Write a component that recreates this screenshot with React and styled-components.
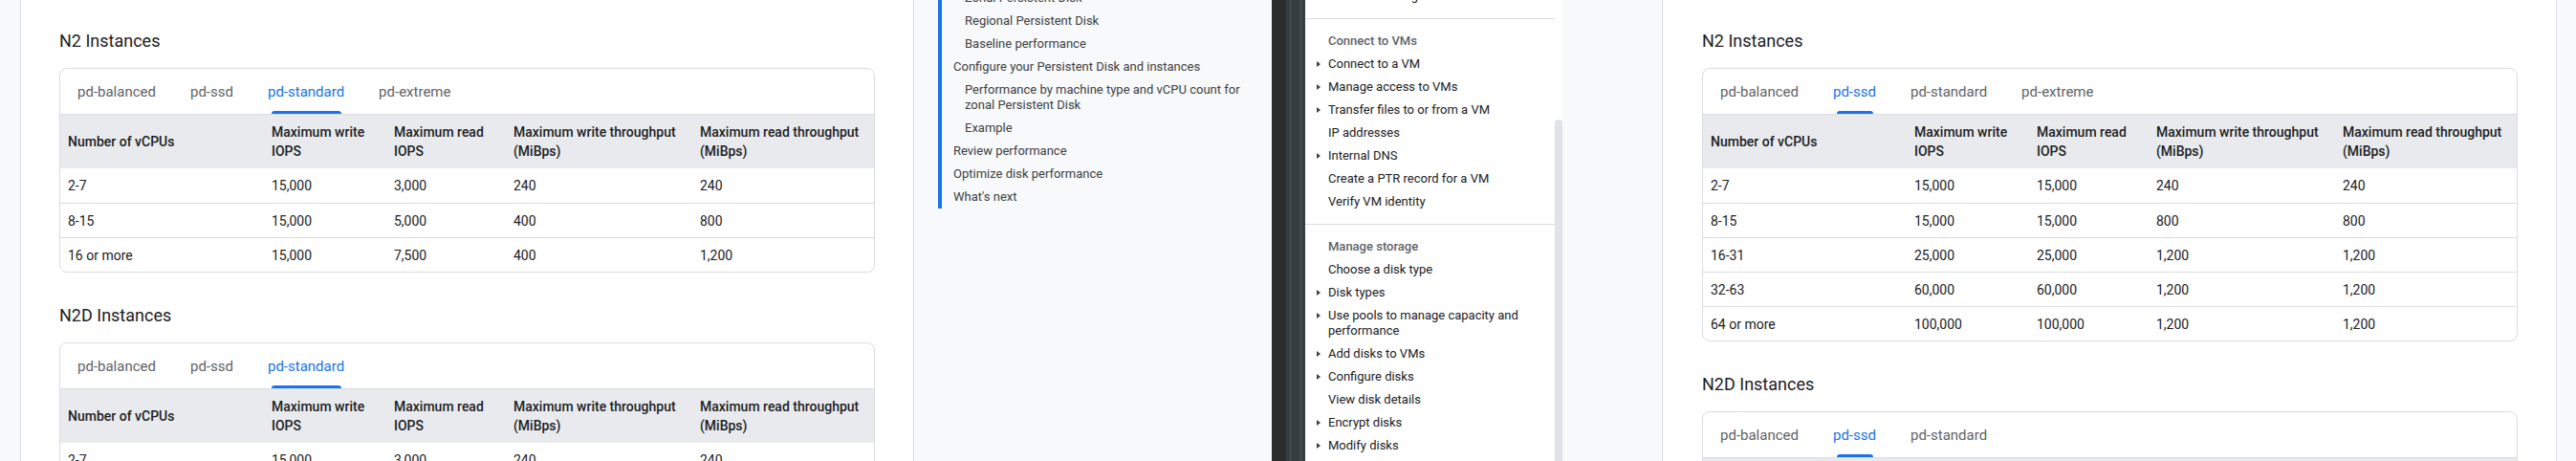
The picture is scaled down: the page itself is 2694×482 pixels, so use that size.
import React from "react";
import styled, { createGlobalStyle } from "styled-components";

const GlobalStyle = createGlobalStyle`
  html, body {
    margin: 0;
    padding: 0;
    background: #f8f9fa;
  }
  body {
    font-family: Roboto, "Liberation Sans", Arial, sans-serif;
    color: #202124;
    -webkit-font-smoothing: antialiased;
  }
  * {
    box-sizing: border-box;
  }
`;

const Page = styled.div`
  display: flex;
  width: 2694px;
  height: 482px;
  overflow: hidden;
  background: #f8f9fa;
`;

const Gutter = styled.div`
  flex: none;
  width: ${({ $w }) => $w}px;
  height: 100%;
  background: #f8f9fa;
`;

const Content = styled.main`
  flex: none;
  width: ${({ $w }) => $w}px;
  height: 100%;
  background: #fff;
  border-left: ${({ $bl }) => ($bl ? "1px solid #dadce0" : "none")};
  border-right: 1px solid #dadce0;
  padding: 31px 0 0 ${({ $pl }) => $pl}px;
  overflow: hidden;
`;

const Heading = styled.h3`
  margin: 0 0 16px;
  font-size: 18px;
  line-height: 24px;
  font-weight: 400;
  color: #202124;
`;

const Card = styled.div`
  width: 853px;
  border: 1px solid #dadce0;
  border-radius: 8px;
  overflow: hidden;
  margin-bottom: 33px;
`;

const TabBar = styled.div`
  display: flex;
  height: 48px;
  border-bottom: 1px solid #dadce0;
`;

const Tab = styled.div`
  position: relative;
  display: flex;
  align-items: center;
  padding: 0 18px;
  font-size: 15px;
  font-weight: 400;
  color: ${({ $active }) => ($active ? "#1a73e8" : "#5f6368")};

  &::after {
    content: "";
    display: ${({ $active }) => ($active ? "block" : "none")};
    position: absolute;
    left: 22px;
    right: 21px;
    bottom: 0;
    height: 3px;
    border-radius: 3px 3px 0 0;
    background: #1a73e8;
  }
`;

const Table = styled.table`
  width: 100%;
  border-collapse: separate;
  border-spacing: 0;
  table-layout: fixed;
  font-size: 14px;
  line-height: 20px;
`;

const Th = styled.th`
  height: 56px;
  padding: 0 8px;
  background: #e8eaed;
  text-align: left;
  vertical-align: middle;
  font-weight: 500;
  color: #202124;
`;

const Td = styled.td`
  height: 36px;
  padding: 0 8px;
  border-top: ${({ $first }) => ($first ? "none" : "1px solid #dadce0")};
  vertical-align: middle;
  color: #202124;
`;

const Toc = styled.aside`
  flex: none;
  width: 374px;
  height: 100%;
  background: #f8f9fa;
  padding-left: 25px;
  overflow: hidden;
`;

const TocList = styled.ul`
  margin: -14px 0 0;
  padding: 0;
  list-style: none;
  border-left: 4px solid #1a73e8;
`;

const TocItem = styled.li`
  padding: 4px 0 4px ${({ $level }) => ($level === 2 ? 24 : 12)}px;
  font-size: 13px;
  line-height: 16px;
  color: #3c4043;
`;

const Editor = styled.div`
  flex: none;
  display: flex;
  width: 35px;
  height: 100%;
`;

const EditorEdge = styled.div`
  width: 15px;
  background: #2c2c2c;
`;

const EditorRail = styled.div`
  width: 20px;
  background: linear-gradient(
    to right,
    #363e41 4px,
    #4f585c 4px 5px,
    #363e41 5px 15px,
    #4f585c 15px 16px,
    #363e41 16px
  );
`;

const Nav = styled.nav`
  flex: none;
  display: flex;
  width: 269px;
  height: 100%;
  background: #fff;
  overflow: hidden;
`;

const NavList = styled.div`
  flex: 1;
  margin-top: -27px;
`;

const NavSection = styled.div`
  padding: 11px 0;

  & + & {
    border-top: 1px solid #dadce0;
  }
`;

const NavRow = styled.div`
  display: flex;
  align-items: flex-start;
  padding: 4px 16px 4px 12px;
  font-size: 13px;
  line-height: 16px;
  font-weight: ${({ $heading }) => ($heading ? 500 : 400)};
  color: ${({ $heading }) => ($heading ? "#5f6368" : "#202124")};
`;

const Caret = styled.span`
  flex: none;
  display: flex;
  align-items: center;
  width: 12px;
  height: 16px;

  &::before {
    content: "";
    display: ${({ $show }) => ($show ? "block" : "none")};
    border-left: 4px solid #3c4043;
    border-top: 3.5px solid transparent;
    border-bottom: 3.5px solid transparent;
  }
`;

const ScrollTrack = styled.div`
  flex: none;
  width: 8px;
  padding-top: 125px;
`;

const ScrollThumb = styled.div`
  height: 100%;
  border-radius: 4px 4px 0 0;
  background: #e0e2e5;
`;

const HEAD = [
  "Number of vCPUs",
  ["Maximum write", "IOPS"],
  ["Maximum read", "IOPS"],
  ["Maximum write throughput", "(MiBps)"],
  ["Maximum read throughput", "(MiBps)"],
];

const COLS = [213, 128, 125, 195, 190];

const STANDARD = [
  ["2-7", "15,000", "3,000", "240", "240"],
  ["8-15", "15,000", "5,000", "400", "800"],
  ["16 or more", "15,000", "7,500", "400", "1,200"],
];

const SSD = [
  ["2-7", "15,000", "15,000", "240", "240"],
  ["8-15", "15,000", "15,000", "800", "800"],
  ["16-31", "25,000", "25,000", "1,200", "1,200"],
  ["32-63", "60,000", "60,000", "1,200", "1,200"],
  ["64 or more", "100,000", "100,000", "1,200", "1,200"],
];

const TABS4 = ["pd-balanced", "pd-ssd", "pd-standard", "pd-extreme"];
const TABS3 = ["pd-balanced", "pd-ssd", "pd-standard"];

const PerfCard = ({ tabs, active, rows }) => (
  <Card>
    <TabBar>
      {tabs.map((t, i) => (
        <Tab key={t} $active={i === active}>
          {t}
        </Tab>
      ))}
    </TabBar>
    <Table>
      <colgroup>
        {COLS.map((w, i) => (
          <col key={i} style={{ width: w }} />
        ))}
      </colgroup>
      <thead>
        <tr>
          {HEAD.map((h, i) => (
            <Th key={i}>
              {Array.isArray(h) ? (
                <>
                  {h[0]}
                  <br />
                  {h[1]}
                </>
              ) : (
                h
              )}
            </Th>
          ))}
        </tr>
      </thead>
      <tbody>
        {rows.map((r, ri) => (
          <tr key={ri}>
            {r.map((c, ci) => (
              <Td key={ci} $first={ri === 0}>
                {c}
              </Td>
            ))}
          </tr>
        ))}
      </tbody>
    </Table>
  </Card>
);

const TOC = [
  [2, "Zonal Persistent Disk"],
  [2, "Regional Persistent Disk"],
  [2, "Baseline performance"],
  [1, "Configure your Persistent Disk and instances"],
  [2, ["Performance by machine type and vCPU count for", "zonal Persistent Disk"]],
  [2, "Example"],
  [1, "Review performance"],
  [1, "Optimize disk performance"],
  [1, "What's next"],
];

const NAV = [
  [[false, "Troubleshooting"]],
  [
    ["head", "Connect to VMs"],
    [true, "Connect to a VM"],
    [true, "Manage access to VMs"],
    [true, "Transfer files to or from a VM"],
    [false, "IP addresses"],
    [true, "Internal DNS"],
    [false, "Create a PTR record for a VM"],
    [false, "Verify VM identity"],
  ],
  [
    ["head", "Manage storage"],
    [false, "Choose a disk type"],
    [true, "Disk types"],
    [true, ["Use pools to manage capacity and", "performance"]],
    [true, "Add disks to VMs"],
    [true, "Configure disks"],
    [false, "View disk details"],
    [true, "Encrypt disks"],
    [true, "Modify disks"],
    [true, "Back up disks"],
  ],
];

const lines = (t) =>
  Array.isArray(t) ? (
    <>
      {t[0]}
      <br />
      {t[1]}
    </>
  ) : (
    t
  );

export default function App() {
  return (
    <>
      <GlobalStyle />
      <Page>
        <Gutter $w={21} />
        <Content $w={935} $pl={40} $bl>
          <Heading>N2 Instances</Heading>
          <PerfCard tabs={TABS4} active={2} rows={STANDARD} />
          <Heading>N2D Instances</Heading>
          <PerfCard tabs={TABS3} active={2} rows={STANDARD} />
        </Content>

        <Toc>
          <TocList>
            {TOC.map(([lvl, t], i) => (
              <TocItem key={i} $level={lvl}>
                {lines(t)}
              </TocItem>
            ))}
          </TocList>
        </Toc>

        <Editor>
          <EditorEdge />
          <EditorRail />
        </Editor>

        <Nav>
          <NavList>
            {NAV.map((sec, si) => (
              <NavSection key={si}>
                {sec.map(([kind, t], i) => (
                  <NavRow key={i} $heading={kind === "head"}>
                    <Caret $show={kind === true} />
                    <span>{lines(t)}</span>
                  </NavRow>
                ))}
              </NavSection>
            ))}
          </NavList>
          <ScrollTrack>
            <ScrollThumb />
          </ScrollTrack>
        </Nav>

        <Gutter $w={104} />
        <Content $w={936} $pl={41} $bl>
          <Heading>N2 Instances</Heading>
          <PerfCard tabs={TABS4} active={1} rows={SSD} />
          <Heading>N2D Instances</Heading>
          <PerfCard tabs={TABS3} active={1} rows={SSD} />
        </Content>
        <Gutter $w={20} />
      </Page>
    </>
  );
}
